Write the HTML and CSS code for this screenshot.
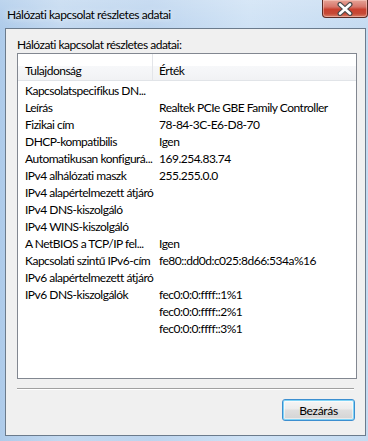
FILE: index.html
```html
<!DOCTYPE html>
<html lang="hu">
<head>
<meta charset="utf-8">
<title>Hálózati kapcsolat részletes adatai</title>
<link rel="stylesheet" href="styles.css">
</head>
<body>
<div class="window">
  <div class="titlebar">
    <div class="title">Hálózati kapcsolat részletes adatai</div>
    <div class="close">
      <svg width="18" height="14" viewBox="0 0 18 14">
        <path d="M4 2.5 L14 11.5 M14 2.5 L4 11.5" stroke="#4b4b4b" stroke-width="5" stroke-linecap="round"/>
        <path d="M4 2.5 L14 11.5 M14 2.5 L4 11.5" stroke="#ffffff" stroke-width="2.6" stroke-linecap="round"/>
      </svg>
    </div>
  </div>
  <div class="client">
    <div class="label">Hálózati kapcsolat részletes adatai:</div>
    <div class="listview">
      <div class="header">
        <div class="hcell first">Tulajdonság</div>
        <div class="hcell">Érték</div>
      </div>
      <div class="rows">
        <div class="row"><div class="prop">Kapcsolatspecifikus DN...</div><div class="val"></div></div>
        <div class="row"><div class="prop">Leírás</div><div class="val">Realtek PCIe GBE Family Controller</div></div>
        <div class="row"><div class="prop">Fizikai cím</div><div class="val">78-84-3C-E6-D8-70</div></div>
        <div class="row"><div class="prop">DHCP-kompatibilis</div><div class="val">Igen</div></div>
        <div class="row"><div class="prop">Automatikusan konfigurá...</div><div class="val">169.254.83.74</div></div>
        <div class="row"><div class="prop">IPv4 alhálózati maszk</div><div class="val">255.255.0.0</div></div>
        <div class="row"><div class="prop">IPv4 alapértelmezett átjáró</div><div class="val"></div></div>
        <div class="row"><div class="prop">IPv4 DNS-kiszolgáló</div><div class="val"></div></div>
        <div class="row"><div class="prop">IPv4 WINS-kiszolgáló</div><div class="val"></div></div>
        <div class="row"><div class="prop">A NetBIOS a TCP/IP fel...</div><div class="val">Igen</div></div>
        <div class="row"><div class="prop">Kapcsolati szintű IPv6-cím</div><div class="val">fe80::dd0d:c025:8d66:534a%16</div></div>
        <div class="row"><div class="prop">IPv6 alapértelmezett átjáró</div><div class="val"></div></div>
        <div class="row"><div class="prop">IPv6 DNS-kiszolgálók</div><div class="val">fec0:0:0:ffff::1%1</div></div>
        <div class="row"><div class="prop"></div><div class="val">fec0:0:0:ffff::2%1</div></div>
        <div class="row"><div class="prop"></div><div class="val">fec0:0:0:ffff::3%1</div></div>
      </div>
    </div>
    <div class="separator"></div>
    <div class="actions">
      <button class="btn">Bezárás</button>
    </div>
  </div>
</div>
</body>
</html>
```
FILE: styles.css
```css
html, body {
  margin: 0;
  padding: 0;
}
body {
  width: 368px;
  height: 441px;
  overflow: hidden;
  font-family: Lato, "Noto Sans", sans-serif;
  font-size: 12px;
  letter-spacing: -0.5px;
  color: #000;
}
.window {
  width: 368px;
  height: 441px;
  box-sizing: border-box;
  padding: 0 2px 5px 5px;
  display: flex;
  flex-direction: column;
  background:
    linear-gradient(180deg, rgba(255,255,255,0.18) 0px, rgba(255,255,255,0) 28px),
    linear-gradient(90deg, #aecbea 0px, #c3d9f0 60px, #bcd4ee 150px, #cfe2f5 250px, #c5dbf1 368px);
}
.titlebar {
  height: 28px;
  display: flex;
  align-items: flex-start;
  margin-left: -5px;
  margin-right: -2px;
}
.title {
  padding: 6px 0 0 7px;
  line-height: 17px;
  letter-spacing: -0.45px;
  color: #000;
  text-shadow: 0 0 6px rgba(255,255,255,0.9);
}
.close {
  margin-left: auto;
  width: 46px;
  height: 18px;
  box-sizing: border-box;
  border: 1px solid #5a2b25;
  border-top: 0;
  border-radius: 0 0 4px 4px;
  background: linear-gradient(180deg, #e6a497 0%, #d7766a 40%, #c9412f 55%, #c64a36 80%, #d9806a 100%);
  box-shadow: inset 0 0 0 1px rgba(255,220,210,0.45);
  display: flex;
  align-items: center;
  justify-content: center;
}
.client {
  flex: 1;
  background: #f0f0f0;
  border: 1px solid #6b7b8c;
  padding: 7px 8px 0 11px;
  display: flex;
  flex-direction: column;
}
.label {
  line-height: 17px;
  height: 17px;
  white-space: nowrap;
}
.listview {
  height: 326px;
  box-sizing: border-box;
  border: 1px solid #828790;
  background: #fff;
  display: flex;
  flex-direction: column;
}
.header {
  height: 27px;
  box-sizing: border-box;
  display: flex;
  background: linear-gradient(180deg, #ffffff 0%, #ffffff 45%, #f7f8fa 46%, #f1f2f4 100%);
  border-bottom: 1px solid #e1e4e8;
}
.hcell {
  padding: 8px 0 0 6px;
  line-height: 17px;
  flex: 1;
}
.hcell.first {
  flex: 0 0 135px;
  box-sizing: border-box;
  padding-left: 7px;
  border-right: 1px solid #e3e5e9;
}
.rows {
  padding-top: 1px;
}
.row {
  display: flex;
  height: 17px;
  line-height: 17px;
  white-space: nowrap;
}
.prop {
  flex: 0 0 135px;
  box-sizing: border-box;
  padding-left: 7px;
}
.val {
  padding-left: 6px;
}
.separator {
  margin-top: 9px;
  height: 1px;
  width: 337px;
  background: #a0a0a0;
  border-bottom: 1px solid #ffffff;
}
.actions {
  display: flex;
  justify-content: flex-end;
  margin-top: 9px;
  padding-right: 2px;
}
.btn {
  width: 73px;
  height: 22px;
  padding: 0;
  font: inherit;
  letter-spacing: -0.3px;
  color: #000;
  border: 1px solid #3c8fd0;
  border-radius: 3px;
  background: linear-gradient(180deg, #f6f6f6 0%, #ececec 45%, #dfdfdf 50%, #d3d3d3 100%);
  box-shadow: inset 0 0 0 1px #7fd3f6, inset 0 0 0 2px rgba(255,255,255,0.5);
}
```
